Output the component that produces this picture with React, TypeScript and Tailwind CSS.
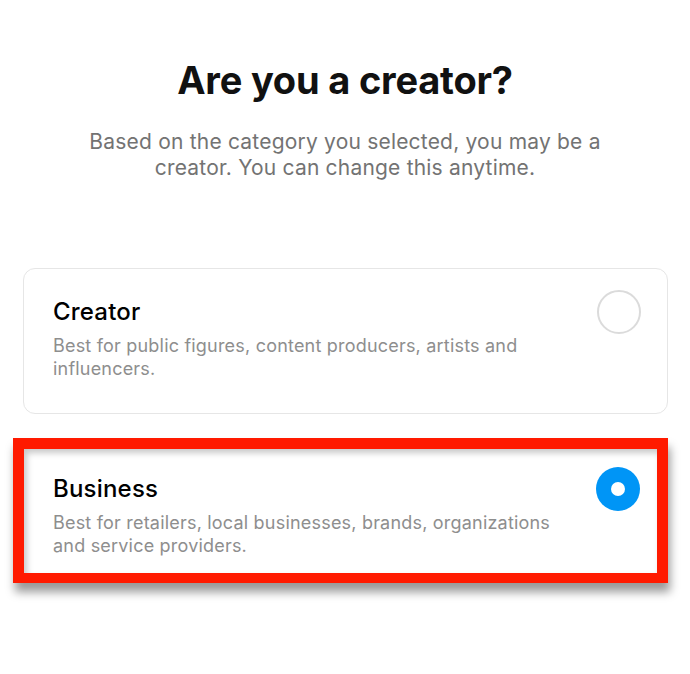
import { useState } from 'react'

type Choice = 'creator' | 'business'

const OPTIONS: { key: Choice; title: string; desc: string }[] = [
  {
    key: 'creator',
    title: 'Creator',
    desc: 'Best for public figures, content producers, artists and influencers.',
  },
  {
    key: 'business',
    title: 'Business',
    desc: 'Best for retailers, local businesses, brands, organizations and service providers.',
  },
]

const Radio = ({ checked }: { checked: boolean }) =>
  checked ? (
    <span className="mt-px flex h-[44px] w-[44px] shrink-0 items-center justify-center rounded-full bg-[#0095f6]">
      <span className="h-[14px] w-[14px] rounded-full bg-white" />
    </span>
  ) : (
    <span className="mt-px h-[44px] w-[44px] shrink-0 rounded-full border-2 border-[#dbdbdb]" />
  )

export default function App() {
  const [choice, setChoice] = useState<Choice>('business')

  return (
    <div
      className="flex min-h-[674px] w-[690px] flex-col items-center bg-white"
      style={{ fontFamily: 'Inter, "Noto Sans", sans-serif' }}
    >
      <h1 className="mt-[57px] text-[38px] font-bold leading-[46px] tracking-[-0.2px] text-[#111]">
        Are you a creator?
      </h1>
      <p className="mt-[26px] w-[560px] text-center text-[21px] leading-[26px] tracking-[0.2px] text-[#737373]">
        Based on the category you selected, you may be a creator. You can change this anytime.
      </p>

      {/* option cards */}
      <div className="ml-[23px] mt-[87px] flex w-[645px] flex-col self-start">
        {OPTIONS.map((opt) => {
          const selected = choice === opt.key
          return (
            <button
              key={opt.key}
              onClick={() => setChoice(opt.key)}
              className={
                selected
                  ? 'ml-[-10px] mt-[24px] flex h-[145px] w-[655px] items-start justify-between border-[11px] border-b-[10px] border-[#ff1a00] bg-white pl-[29px] pr-[17px] pt-[17px] text-left shadow-[2px_9px_9px_rgba(0,0,0,0.4),inset_3px_4px_6px_rgba(0,0,0,0.22)]'
                  : 'flex h-[146px] items-start justify-between rounded-[12px] border border-[#e6e6e6] bg-white pl-[29px] pr-[26px] pt-[20px] text-left'
              }
            >
              <div className="flex w-[510px] flex-col">
                <span className="text-[24px] font-medium leading-[46px] tracking-[0.2px] text-black">
                  {opt.title}
                </span>
                <span className="mt-[-1px] text-[18px] leading-[23px] tracking-[0.2px] text-[#8e8e8e]">
                  {opt.desc}
                </span>
              </div>
              <Radio checked={selected} />
            </button>
          )
        })}
      </div>
    </div>
  )
}
